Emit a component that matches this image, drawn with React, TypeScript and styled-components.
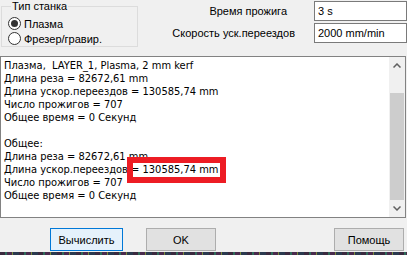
import React from "react";
import styled, { createGlobalStyle } from "styled-components";

const Global = createGlobalStyle`
  html, body {
    margin: 0;
    padding: 0;
    background: #f0f0f0;
  }
  * {
    box-sizing: border-box;
  }
`;

const Page = styled.div`
  width: 407px;
  height: 255px;
  overflow: hidden;
  background: #f0f0f0;
  font-family: "Liberation Sans", Arial, sans-serif;
  font-size: 11px;
  color: #000;
  display: flex;
  flex-direction: column;
`;

const TopRow = styled.div`
  display: flex;
  height: 56px;
`;

const GroupBox = styled.fieldset`
  margin: 0 0 0 1px;
  width: 137px;
  height: 47px;
  padding: 3px 0 0 6px;
  border: 1px solid #dcdcdc;
  border-radius: 0;
`;

const Legend = styled.legend`
  padding: 0 1px;
  margin-left: 3px;
  line-height: 13px;
  font-size: 11px;
`;

const RadioRow = styled.label`
  display: flex;
  align-items: center;
  gap: 3px;
  height: 15px;
`;

const RadioCircle = styled.span<{ $checked?: boolean }>`
  width: 13px;
  height: 13px;
  border-radius: 50%;
  border: 1px solid #333;
  background: #fff;
  display: flex;
  align-items: center;
  justify-content: center;
  &::after {
    content: "";
    width: 7px;
    height: 7px;
    border-radius: 50%;
    background: ${(p) => (p.$checked ? "#333" : "transparent")};
  }
`;

const Params = styled.div`
  margin-left: auto;
  display: grid;
  grid-template-columns: auto 93px;
  grid-auto-rows: 20px;
  row-gap: 2px;
  column-gap: 19px;
  padding-top: 1px;
`;

const ParamLabel = styled.div<{ $pad?: number }>`
  display: flex;
  align-items: center;
  justify-content: flex-end;
  padding-right: ${(p) => p.$pad ?? 0}px;
`;

const Field = styled.div`
  border: 1px solid #7a7a7a;
  background: #fff;
  padding-left: 3px;
  display: flex;
  align-items: center;
`;

const Memo = styled.div`
  position: relative;
  width: 406px;
  height: 162px;
  border: 1px solid #828282;
  background: #fff;
  display: flex;
`;

const MemoText = styled.div`
  flex: 1;
  padding: 2px 3px;
  font-family: "DejaVu Sans Condensed", "Liberation Sans", sans-serif;
  line-height: 13px;
  white-space: pre;
`;

const Line = styled.div`
  height: 13px;
`;

const Highlight = styled.div`
  position: absolute;
  left: 126px;
  top: 100px;
  width: 99px;
  height: 26px;
  border: 6px solid #ed1c24;
`;

const ScrollBar = styled.div`
  width: 16px;
  display: flex;
  flex-direction: column;
  background: #f0f0f0;
`;

const ArrowBtn = styled.div`
  height: 17px;
  display: flex;
  align-items: center;
  justify-content: center;
`;

const Track = styled.div`
  flex: 1;
  padding-top: 19px;
`;

const Thumb = styled.div`
  height: 107px;
  margin: 0 1px;
  background: #cdcdcd;
`;

const ButtonRow = styled.div`
  display: flex;
  margin-top: 10px;
  height: 23px;
`;

const Button = styled.div<{ $left: number; $width: number; $focused?: boolean }>`
  margin-left: ${(p) => p.$left}px;
  width: ${(p) => p.$width}px;
  border: 1px solid ${(p) => (p.$focused ? "#0078d7" : "#adadad")};
  background: ${(p) => (p.$focused ? "#e5f1fb" : "#e1e1e1")};
  display: flex;
  align-items: center;
  justify-content: center;
`;

const Glitch = styled.div`
  margin-top: 1px;
  height: 3px;
  background: repeating-linear-gradient(
    90deg,
    #3b2a3f 0 5px,
    #2f6b5a 5px 7px,
    #4a2b4d 7px 12px,
    #7a8a3a 12px 13px,
    #2b3a4f 13px 19px
  );
`;

const Chevron = ({ up }: { up?: boolean }) => (
  <svg width="8" height="5" viewBox="0 0 8 5">
    <path
      d={up ? "M0.5 4.5 L4 1 L7.5 4.5" : "M0.5 0.5 L4 4 L7.5 0.5"}
      fill="none"
      stroke="#606060"
      strokeWidth="1.5"
    />
  </svg>
);

const lines = [
  "Плазма,  LAYER_1, Plasma, 2 mm kerf",
  "Длина реза = 82672,61 mm",
  "Длина ускор.переездов = 130585,74 mm",
  "Число прожигов = 707",
  "Общее время = 0 Секунд",
  "",
  "Общее:",
  "Длина реза = 82672,61 mm",
  "Длина ускор.переездов = 130585,74 mm",
  "Число прожигов = 707",
  "Общее время = 0 Секунд",
];

export default function App() {
  return (
    <Page>
      <Global />
      <TopRow>
        <GroupBox>
          <Legend>Тип станка</Legend>
          <RadioRow>
            <RadioCircle $checked />
            Плазма
          </RadioRow>
          <RadioRow>
            <RadioCircle />
            Фрезер/гравир.
          </RadioRow>
        </GroupBox>
        <Params>
          <ParamLabel $pad={8}>Время прожига</ParamLabel>
          <Field>3 s</Field>
          <ParamLabel>Скорость уск.переездов</ParamLabel>
          <Field>2000 mm/min</Field>
        </Params>
      </TopRow>
      <Memo>
        <MemoText>
          {lines.map((l, i) => (
            <Line key={i}>{l}</Line>
          ))}
        </MemoText>
        <ScrollBar>
          <ArrowBtn>
            <Chevron up />
          </ArrowBtn>
          <Track>
            <Thumb />
          </Track>
          <ArrowBtn>
            <Chevron />
          </ArrowBtn>
        </ScrollBar>
        <Highlight />
      </Memo>
      <ButtonRow>
        <Button $left={50} $width={73} $focused>
          Вычислить
        </Button>
        <Button $left={23} $width={70}>
          OK
        </Button>
        <Button $left={118} $width={70}>
          Помощь
        </Button>
      </ButtonRow>
      <Glitch />
    </Page>
  );
}
